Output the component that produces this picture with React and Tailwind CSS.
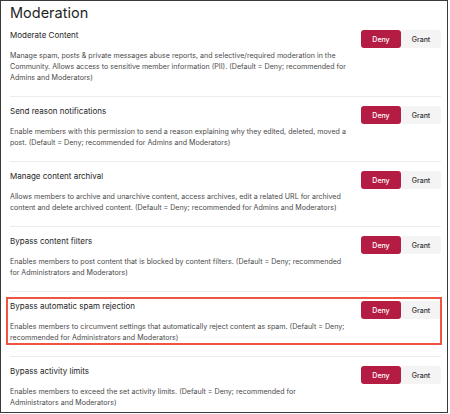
import React from 'react'

const rows = [
  {
    title: 'Moderate Content',
    lines: [
      'Manage spam, posts & private messages abuse reports, and selective/required moderation in the',
      'Community. Allows access to sensitive member information (PII). (Default = Deny; recommended for',
      'Admins and Moderators)',
    ],
  },
  {
    title: 'Send reason notifications',
    lines: [
      'Enable members with this permission to send a reason explaining why they edited, deleted, moved a',
      'post. (Default = Deny; recommended for Admins and Moderators)',
    ],
  },
  {
    title: 'Manage content archival',
    lines: [
      'Allows members to archive and unarchive content, access archives, edit a related URL for archived',
      'content and delete archived content. (Default = Deny; recommended for Admins and Moderators)',
    ],
  },
  {
    title: 'Bypass content filters',
    lines: [
      'Enables members to post content that is blocked by content filters. (Default = Deny; recommended',
      'for Administrators and Moderators)',
    ],
  },
  {
    title: 'Bypass automatic spam rejection',
    highlight: true,
    lines: [
      'Enables members to circumvent settings that automatically reject content as spam. (Default = Deny;',
      'recommended for Administrators and Moderators)',
    ],
  },
  {
    title: 'Bypass activity limits',
    lines: [
      'Enables members to exceed the set activity limits. (Default = Deny; recommended for',
      'Administrators and Moderators)',
    ],
  },
]

function Toggle() {
  return (
    <div className="flex shrink-0">
      <button className="w-[40px] h-[18px] rounded-[3px] bg-[#b51c44] text-white text-[7px] font-medium leading-none">
        Deny
      </button>
      <button className="w-[40px] h-[18px] rounded-r-[3px] bg-[#f4f4f4] text-[#333] text-[7px] font-medium leading-none">
        Grant
      </button>
    </div>
  )
}

function PermissionRow({ title, lines, highlight, first }) {
  return (
    <div className={`relative flex justify-between ${first ? 'pt-[7px]' : 'border-t border-[#ececec] pt-[8px]'} pb-[13px]`}>
      <div>
        <div className="text-[8px] leading-[13px] font-normal text-[#1e1e1e]">{title}</div>
        <p className="mt-[8px] text-[7.1px] leading-[11px] text-[#4a4a4a] whitespace-nowrap">
          {lines.map((l, i) => (
            <React.Fragment key={i}>
              {l}
              {i < lines.length - 1 && <br />}
            </React.Fragment>
          ))}
        </p>
      </div>
      <div className="pt-[1px]">
        <Toggle />
      </div>
      {highlight && (
        <div className="pointer-events-none absolute left-[-4px] right-[-1px] top-[5px] h-[48px] border-2 border-[#ef5443]" />
      )}
    </div>
  )
}

export default function App() {
  return (
    <div className="w-[450px] h-[414px] bg-white" style={{ fontFamily: 'Inter, "Noto Sans", sans-serif' }}>
      <div className="w-[448px] h-[413px] border border-[#3a3a3a] overflow-hidden pl-[9px] pr-[6px]">
        <h1 className="pt-[3px] text-[14.5px] leading-[18px] font-normal text-[#1f1f1f]">Moderation</h1>
        {rows.map((r, i) => (
          <PermissionRow key={r.title} {...r} first={i === 0} />
        ))}
      </div>
    </div>
  )
}
